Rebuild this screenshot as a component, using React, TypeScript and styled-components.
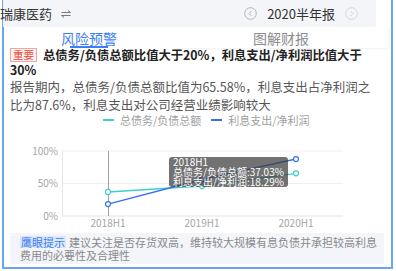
import React from 'react';
import styled, { createGlobalStyle } from 'styled-components';

const GlobalStyle = createGlobalStyle`
  html, body {
    margin: 0;
    padding: 0;
    background: #fff;
  }
  body {
    font-family: "Noto Sans CJK SC", "Noto Sans", sans-serif;
  }
`;

const Page = styled.div`
  width: 396px;
  height: 271px;
  overflow: hidden;
  background: #fff;
`;

const Frame = styled.div`
  margin-left: 2px;
  width: 387px;
  height: 267px;
  border: 2px solid #6aa6ee;
  border-top: none;
`;

const Header = styled.div`
  margin-left: -1px;
  width: 373px;
  height: 27px;
  background: #f4f5f9;
  display: flex;
  align-items: center;
  justify-content: space-between;
  padding-right: 18px;
  box-sizing: border-box;
`;

const Company = styled.div`
  display: flex;
  align-items: center;
  gap: 9px;
  margin-left: -3px;
  font-size: 13px;
  color: #333;
`;

const Period = styled.div`
  display: flex;
  align-items: center;
  gap: 10px;
  font-size: 13px;
  color: #333;
`;

const Tabs = styled.div`
  display: grid;
  grid-template-columns: 170px 214px;
  height: 21px;
`;

const Tab = styled.div<{ $active?: boolean }>`
  position: relative;
  display: flex;
  align-items: center;
  justify-content: center;
  font-size: 14px;
  color: ${(p) => (p.$active ? '#3d7ef5' : '#8c8c8c')};
  box-shadow: ${(p) => (p.$active ? 'none' : '1px 1px 2px rgba(0, 0, 0, 0.06)')};

  &::after {
    content: '';
    display: ${(p) => (p.$active ? 'block' : 'none')};
    position: absolute;
    bottom: 0;
    left: 50%;
    width: 38px;
    height: 2px;
    margin-left: -19px;
    background: #3d7ef5;
  }
`;

const Title = styled.div`
  padding: 0 6px;
  font-size: 12.3px;
  line-height: 15px;
  font-weight: bold;
  color: #222;
  white-space: nowrap;
`;

const Tag = styled.span`
  display: inline-block;
  font-size: 10.5px;
  line-height: 12px;
  padding: 0 2px;
  margin-right: 6px;
  font-weight: normal;
  color: #e5473b;
  background: #fff1f0;
  border: 1px solid #f3a59d;
  vertical-align: 1px;
`;

const Paragraph = styled.div`
  padding: 0 6px;
  font-size: 12.5px;
  line-height: 17.5px;
  color: #555;
  white-space: nowrap;
`;

const Legend = styled.div`
  display: flex;
  height: 14px;
  padding-left: 99px;
  gap: 10px;
  align-items: center;
  font-size: 11px;
  color: #a0a0a0;
`;

const LegendItem = styled.div<{ $color: string }>`
  display: flex;
  align-items: center;
  gap: 6px;

  &::before {
    content: '';
    width: 11px;
    height: 2px;
    background: ${(p) => p.$color};
  }
`;

const ChartWrap = styled.div`
  position: relative;
  margin-top: 2px;
  height: 102px;
`;

const Tooltip = styled.div`
  position: absolute;
  left: 165px;
  top: 28px;
  width: 119px;
  height: 30px;
  box-sizing: border-box;
  padding: 0 4px;
  border-radius: 3px;
  background: rgba(60, 60, 60, 0.72);
  color: #fff;
  font-size: 10px;
  line-height: 10px;
  white-space: nowrap;
`;

const TooltipLine = styled.div`
  height: 10px;
`;

const Tip = styled.div`
  margin: 2px 7px 0 6px;
  padding: 3px 10px 2px;
  background: #f3f5fb;
  font-size: 11px;
  line-height: 13px;
  color: #8a8a8a;
  white-space: nowrap;
`;

const TipLabel = styled.span`
  display: inline-block;
  line-height: 12px;
  padding: 0 1px;
  margin-right: 3px;
  background: #dce7fb;
  color: #3b7bf0;
`;

const SwapIcon = () => (
  <svg width="10" height="8" viewBox="0 0 10 8" fill="none" stroke="#777" strokeWidth="1">
    <path d="M0.5 2.5H9.5L7 0.5" />
    <path d="M9.5 5.5H0.5L3 7.5" />
  </svg>
);

const CircleArrow = ({ dir, color }: { dir: 'left' | 'right'; color: string }) => (
  <svg width="13" height="13" viewBox="0 0 13 13" fill="none" stroke={color} strokeWidth="1">
    <circle cx="6.5" cy="6.5" r="5.8" />
    <path d={dir === 'left' ? 'M7.5 4L5 6.5L7.5 9' : 'M5.5 4L8 6.5L5.5 9'} />
  </svg>
);

const xs = [104, 198, 292];
const y0 = 87;
const span = 65;
const toY = (v: number) => y0 - v * span;
const debtRatio = [0.3703, 0.46, 0.6558];
const interestRatio = [0.1829, 0.56, 0.876];
const labels = ['2018H1', '2019H1', '2020H1'];

const line = (vals: number[]) => vals.map((v, i) => `${i ? 'L' : 'M'}${xs[i]} ${toY(v)}`).join(' ');

const Chart = () => (
  <svg width="387" height="102" style={{ display: 'block' }}>
    {[1, 0.5, 0].map((v) => (
      <g key={v}>
        <line x1="58" x2="339" y1={toY(v)} y2={toY(v)} stroke={v === 0 ? '#e2e2e2' : '#efefef'} />
        <text x="54" y={toY(v) + 3.5} textAnchor="end" fontSize="10" fill="#a5a5a5">
          {v * 100}%
        </text>
      </g>
    ))}
    <line x1="58.5" x2="58.5" y1={toY(1)} y2={y0} stroke="#e6e6e6" />
    <line x1="104.5" x2="104.5" y1={toY(1)} y2={y0} stroke="#a0a0a0" />
    <path d={line(debtRatio)} stroke="#3fcdcd" strokeWidth="1.5" fill="none" />
    <path d={line(interestRatio)} stroke="#3a6ff0" strokeWidth="1.5" fill="none" />
    {debtRatio.map((v, i) => (
      <circle key={`d${i}`} cx={xs[i]} cy={toY(v)} r="2.5" fill="#fff" stroke="#3fcdcd" strokeWidth="1.2" />
    ))}
    {interestRatio.map((v, i) => (
      <circle key={`n${i}`} cx={xs[i]} cy={toY(v)} r="2.5" fill="#fff" stroke="#3a6ff0" strokeWidth="1.2" />
    ))}
    {labels.map((l, i) => (
      <text key={l} x={xs[i]} y="98" textAnchor="middle" fontSize="10" fill="#a5a5a5">
        {l}
      </text>
    ))}
  </svg>
);

export default function App() {
  return (
    <Page>
      <GlobalStyle />
      <Frame>
        <Header>
          <Company>
            瑞康医药
            <SwapIcon />
          </Company>
          <Period>
            <CircleArrow dir="left" color="#b5b5b5" />
            2020半年报
            <CircleArrow dir="right" color="#d6d6d6" />
          </Period>
        </Header>
        <Tabs>
          <Tab $active>风险预警</Tab>
          <Tab>图解财报</Tab>
        </Tabs>
        <Title>
          <Tag>重要</Tag>
          总债务/负债总额比值大于20%，利息支出/净利润比值大于
          <br />
          30%
        </Title>
        <Paragraph>
          报告期内，总债务/负债总额比值为65.58%，利息支出占净利润之
          <br />
          比为87.6%，利息支出对公司经营业绩影响较大
        </Paragraph>
        <Legend>
          <LegendItem $color="#3fcdcd">总债务/负债总额</LegendItem>
          <LegendItem $color="#3a6ff0">利息支出/净利润</LegendItem>
        </Legend>
        <ChartWrap>
          <Chart />
          <Tooltip>
            <TooltipLine>2018H1</TooltipLine>
            <TooltipLine>总债务/负债总额:37.03%</TooltipLine>
            <TooltipLine>利息支出/净利润:18.29%</TooltipLine>
          </Tooltip>
        </ChartWrap>
        <Tip>
          <TipLabel>鹰眼提示</TipLabel>
          建议关注是否存货双高，维持较大规模有息负债并承担较高利息
          <br />
          费用的必要性及合理性
        </Tip>
      </Frame>
    </Page>
  );
}
